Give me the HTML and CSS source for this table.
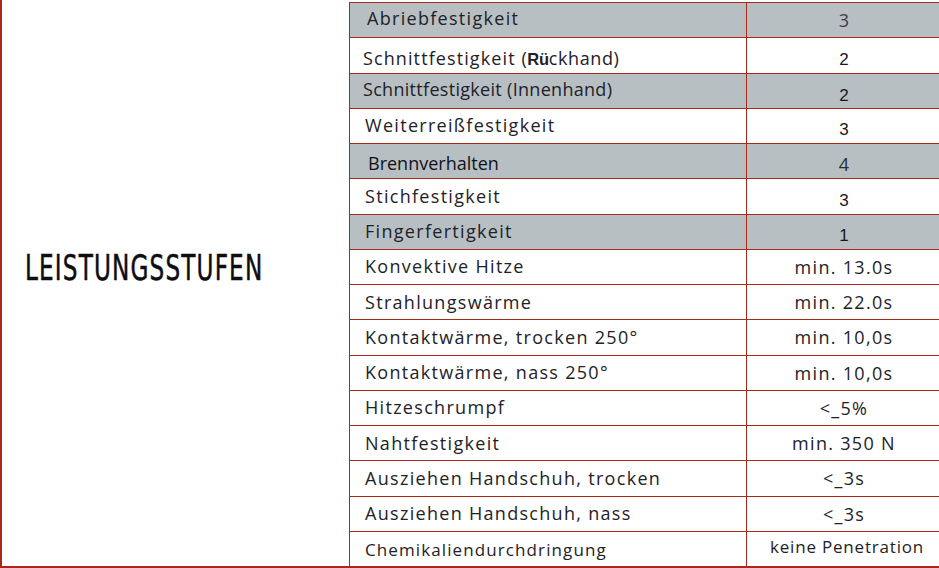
FILE: index.html
```html
<!DOCTYPE html>
<html lang="de">
<head>
<meta charset="utf-8">
<title>Leistungsstufen</title>
<link rel="stylesheet" href="styles.css">
</head>
<body>
<div class="sheet">
  <div class="label-cell">
    <h2 class="label">LEISTUNGSSTUFEN</h2>
  </div>
  <div class="spec-table">
    <div class="row grey"><div class="name n-abrieb"><span>Abriebfestigkeit</span></div><div class="value v-soft">3</div></div>
    <div class="row"><div class="name n-tight"><span>Schnittfestigkeit <span class="paren">(<b class="rue">Rü</b>ckhand)</span></span></div><div class="value v-arial">2</div></div>
    <div class="row grey"><div class="name n-top n-tight2"><span>Schnittfestigkeit (Innenhand)</span></div><div class="value v-arial v-low">2</div></div>
    <div class="row"><div class="name"><span>Weiterreißfestigkeit</span></div><div class="value v-arial">3</div></div>
    <div class="row grey"><div class="name n-plain"><span>Brennverhalten</span></div><div class="value v-soft v-dark">4</div></div>
    <div class="row"><div class="name"><span>Stichfestigkeit</span></div><div class="value v-arial">3</div></div>
    <div class="row grey"><div class="name"><span>Fingerfertigkeit</span></div><div class="value v-arial">1</div></div>
    <div class="row"><div class="name"><span>Konvektive Hitze</span></div><div class="value">min. 13.0s</div></div>
    <div class="row"><div class="name"><span>Strahlungswärme</span></div><div class="value">min. 22.0s</div></div>
    <div class="row"><div class="name"><span>Kontaktwärme, trocken 250°</span></div><div class="value">min. 10,0s</div></div>
    <div class="row"><div class="name"><span>Kontaktwärme, nass 250°</span></div><div class="value">min. 10,0s</div></div>
    <div class="row"><div class="name"><span>Hitzeschrumpf</span></div><div class="value">&lt;_5%</div></div>
    <div class="row"><div class="name"><span>Nahtfestigkeit</span></div><div class="value">min. 350 N</div></div>
    <div class="row"><div class="name"><span>Ausziehen Handschuh, trocken</span></div><div class="value">&lt;_3s</div></div>
    <div class="row"><div class="name"><span>Ausziehen Handschuh, nass</span></div><div class="value">&lt;_3s</div></div>
    <div class="row"><div class="name n-small"><span>Chemikaliendurchdringung</span></div><div class="value v-small">keine Penetration</div></div>
  </div>
</div>
</body>
</html>
```

FILE: styles.css
```css
* { box-sizing: border-box; }

html, body {
  margin: 0;
  padding: 0;
  background: #ffffff;
}

body {
  font-family: "Open Sans", "Liberation Sans", sans-serif;
  color: #1e2228;
  overflow: hidden;
}

.sheet {
  display: grid;
  grid-template-columns: 349px 1fr;
  height: 568px;
  padding-top: 2px;
}

.label-cell {
  border-left: 2px solid #a8291c;
  border-bottom: 2px solid #a8291c;
  display: flex;
  align-items: center;
  padding-left: 23px;
  padding-bottom: 30px;
  margin-top: -2px;
}

.label {
  margin: 0;
  font-family: "DejaVu Sans Condensed", "Liberation Sans", sans-serif;
  font-stretch: condensed;
  font-weight: normal;
  font-size: 36px;
  letter-spacing: 1.6px;
  color: #0d0d12;
  -webkit-text-stroke: 0.5px #0d0d12;
  line-height: 1;
  white-space: nowrap;
  transform: scaleX(0.715);
  transform-origin: left center;
}

.spec-table {
  display: flex;
  flex-direction: column;
  border-left: 1px solid #a8291c;
  border-top: 1px solid #a8291c;
}

.row {
  flex: 1;
  display: grid;
  grid-template-columns: 396px 1fr;
  border-bottom: 1px solid #a8291c;
  font-size: 18px;
  letter-spacing: 1.3px;
}

.row:last-child { border-bottom-width: 2px; }

.row.grey { background: #b7bfc3; }

.name {
  display: flex;
  align-items: center;
  padding-left: 15px;
  padding-bottom: 1px;
  white-space: nowrap;
}

.value {
  display: flex;
  align-items: center;
  justify-content: center;
  border-left: 1px solid #a8291c;
  padding-left: 2px;
  white-space: nowrap;
}

.n-abrieb { padding-left: 17px; padding-bottom: 4px; }
.n-tight { padding-left: 13px; letter-spacing: 1.1px; padding-top: 6px; }
.n-tight2 { padding-left: 13px; letter-spacing: 0.3px; }
.paren { letter-spacing: 0.6px; }
.rue { font-family: "Liberation Sans", sans-serif; font-weight: bold; letter-spacing: -0.3px; font-size: 16.5px; }
.n-top { align-items: flex-start; padding-top: 3px; }
.n-plain { letter-spacing: 0; padding-left: 18px; color: #101216; padding-top: 4px; }
.n-small { font-size: 17px; letter-spacing: 1.1px; padding-top: 3px; }

.v-soft { color: #3c4046; letter-spacing: 0; }
.v-dark { color: #2a2d32; padding-top: 6px; }
.v-arial { font-family: "Liberation Sans", sans-serif; font-size: 17px; letter-spacing: 0; color: #16181c; padding-top: 9px; }
.v-low { align-items: flex-end; padding-bottom: 2px; }
.v-small { font-size: 17px; letter-spacing: 0.8px; padding-bottom: 5px; padding-left: 8px; }
```
